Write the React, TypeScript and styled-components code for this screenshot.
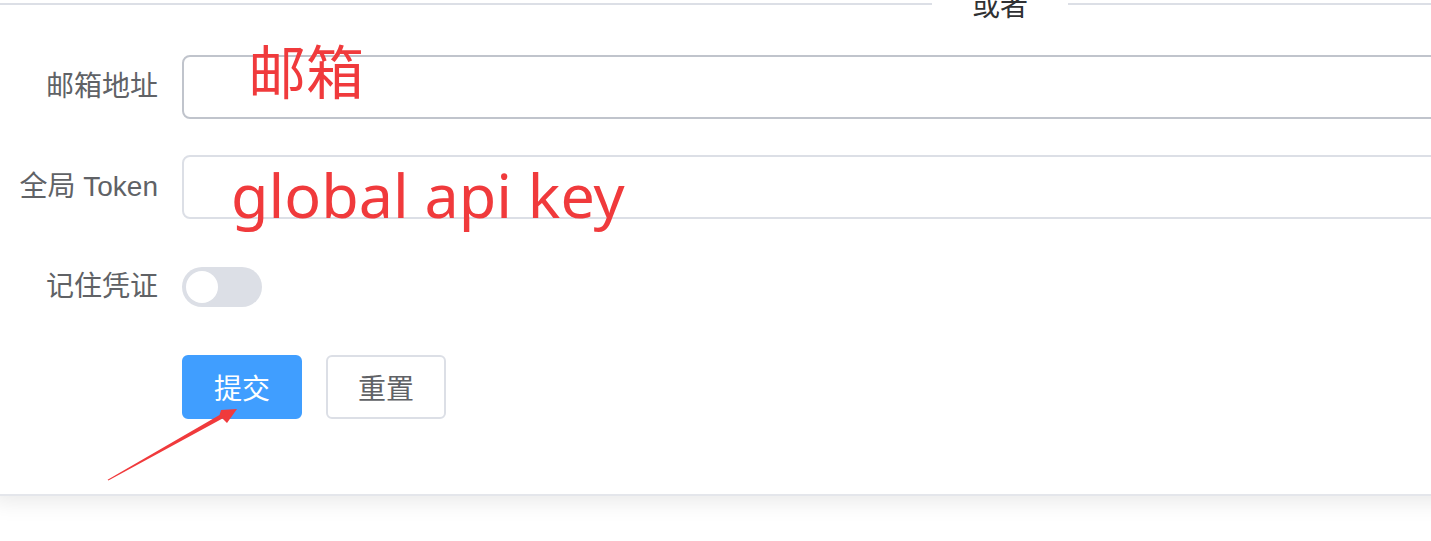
import React from "react";
import styled, { createGlobalStyle } from "styled-components";

const GlobalStyle = createGlobalStyle`
  html, body {
    margin: 0;
    padding: 0;
    background: #fff;
    overflow: hidden;
  }
  body {
    font-family: "Liberation Sans", "Noto Sans CJK SC", sans-serif;
  }
`;

const Page = styled.div`
  position: relative;
  width: 1431px;
  height: 541px;
  overflow: hidden;
`;

const Card = styled.div`
  margin: -20px 0 0 -10px;
  width: 2016px;
  background: #fff;
  border: 2px solid #ebeef5;
  border-bottom-color: #e4e6eb;
  border-radius: 8px;
  box-shadow: 0 4px 24px rgba(0, 0, 0, 0.1);
  padding-bottom: 75px;
`;

const Divider = styled.div`
  position: relative;
  height: 2px;
  margin: 21px 0 50px;
  background: #dcdfe6;
`;

const DividerText = styled.span`
  position: absolute;
  left: 50%;
  top: 50%;
  transform: translate(-50%, -50%);
  padding: 0 40px;
  background: #fff;
  color: #303133;
  font-size: 28px;
  line-height: 1;
  font-family: "Noto Sans CJK SC", sans-serif;
`;

const Form = styled.form`
  display: flex;
  flex-direction: column;
  gap: 36px;
`;

const Item = styled.div`
  display: grid;
  grid-template-columns: 190px 1fr;
  align-items: center;
  min-height: 64px;
  padding-right: 40px;
`;

const Label = styled.label`
  padding-right: 24px;
  text-align: right;
  color: #606266;
  font-size: 28px;
  line-height: 64px;
`;

const Field = styled.div`
  position: relative;
  display: flex;
  align-items: center;
  gap: 24px;
`;

const Input = styled.input<{ $hover?: boolean }>`
  box-sizing: border-box;
  width: 100%;
  height: 64px;
  padding: 0 30px;
  border: 2px solid ${({ $hover }) => ($hover ? "#c0c4cc" : "#dcdfe6")};
  border-radius: 8px;
  outline: none;
  background: #fff;
  font-size: 28px;
`;

const Note = styled.span<{ $cjk?: boolean }>`
  position: absolute;
  color: #f03a3c;
  line-height: 1;
  white-space: nowrap;
  pointer-events: none;
  font-family: ${({ $cjk }) =>
    $cjk ? `"Noto Sans CJK SC", sans-serif` : `"Noto Sans", sans-serif`};
`;

const EmailNote = styled(Note)`
  left: 66px;
  top: -15px;
  font-size: 58px;
`;

const KeyNote = styled(Note)`
  left: 49px;
  top: 9px;
  font-size: 61px;
`;

const Switch = styled.span`
  position: relative;
  display: inline-block;
  width: 80px;
  height: 40px;
  border-radius: 20px;
  background: #dcdfe6;

  &::after {
    content: "";
    position: absolute;
    top: 4px;
    left: 4px;
    width: 32px;
    height: 32px;
    border-radius: 50%;
    background: #fff;
  }
`;

const Button = styled.button<{ $primary?: boolean }>`
  box-sizing: border-box;
  width: 120px;
  height: 64px;
  padding: 0;
  border-radius: 6px;
  border: 2px solid ${({ $primary }) => ($primary ? "#409eff" : "#dcdfe6")};
  background: ${({ $primary }) => ($primary ? "#409eff" : "#fff")};
  color: ${({ $primary }) => ($primary ? "#fff" : "#606266")};
  font-size: 28px;
  font-family: "Noto Sans CJK SC", sans-serif;
  line-height: 1;
  cursor: pointer;
`;

const Arrow = styled.svg`
  position: absolute;
  left: 0;
  top: 0;
  pointer-events: none;
`;

export default function App() {
  return (
    <Page>
      <GlobalStyle />
      <Card>
        <Divider>
          <DividerText>或者</DividerText>
        </Divider>
        <Form onSubmit={(e) => e.preventDefault()}>
          <Item>
            <Label>邮箱地址</Label>
            <Field>
              <Input $hover />
              <EmailNote $cjk>邮箱</EmailNote>
            </Field>
          </Item>
          <Item>
            <Label>全局 Token</Label>
            <Field>
              <Input />
              <KeyNote>global api key</KeyNote>
            </Field>
          </Item>
          <Item>
            <Label>记住凭证</Label>
            <Field>
              <Switch />
            </Field>
          </Item>
          <Item>
            <span />
            <Field>
              <Button $primary type="submit">提交</Button>
              <Button type="button">重置</Button>
            </Field>
          </Item>
        </Form>
      </Card>
      <Arrow width="1431" height="541" viewBox="0 0 1431 541">
        <polygon
          points="107.6,479.8 219.5,415 221,410 237,409 227,423 222.5,418.5 108.4,480.5"
          fill="#f03a3c"
        />
      </Arrow>
    </Page>
  );
}
